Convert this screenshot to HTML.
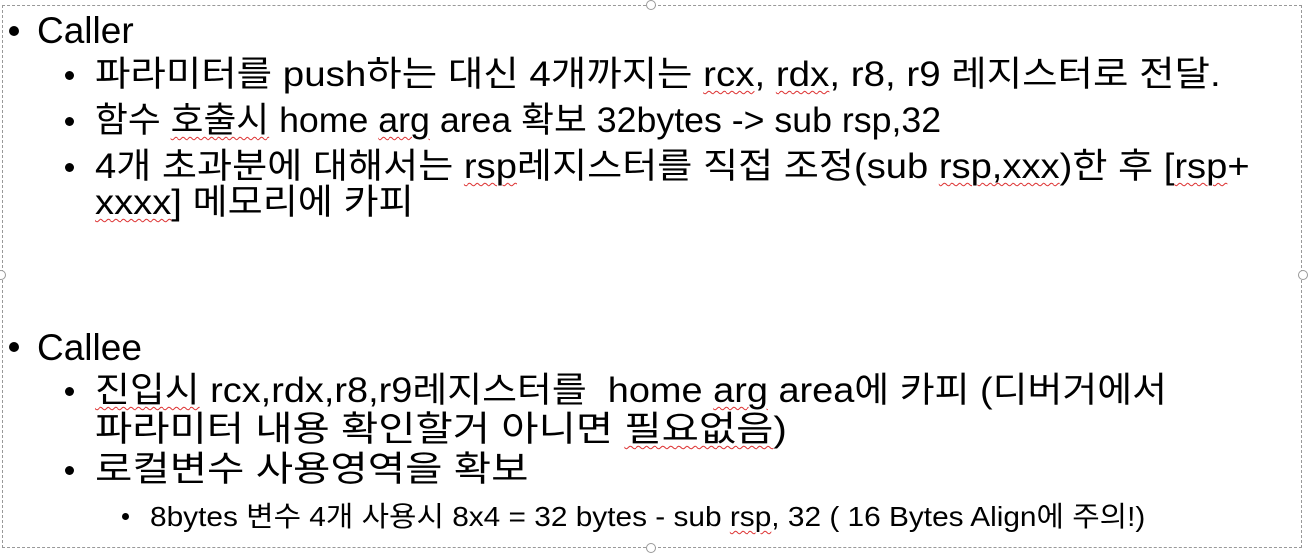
<!DOCTYPE html>
<html><head><meta charset="utf-8"><style>
html,body{margin:0;padding:0;background:#fff;width:1310px;height:556px;overflow:hidden;position:relative;font-family:"Liberation Sans","Noto Sans CJK KR",sans-serif;color:#000}
.l{position:absolute;white-space:nowrap;line-height:1;transform-origin:0 50%}
.b{position:absolute;width:9px;height:9px;border-radius:50%;background:#000}
.w{text-decoration:underline wavy #d33;text-decoration-thickness:1px;text-underline-offset:4px}
.box{position:absolute;left:2px;top:5px;width:1300px;height:543px;border:1px dashed #999;box-sizing:border-box}
.h{position:absolute;width:8px;height:8px;border:1px solid #999;border-radius:50%;background:#fff}
</style></head><body>
<div class="box"></div>
<div class="h" style="left:646px;top:0px"></div>
<div class="h" style="left:1298px;top:270px"></div>
<div class="h" style="left:646px;top:543px"></div>
<div class="h" style="left:-4px;top:270px"></div>

<div class="b" style="left:9px;top:26px;width:10px;height:10px"></div>
<div class="l" style="left:37px;top:12px;font-size:37px">Caller</div>
<div class="b" style="left:65px;top:71px"></div>
<div class="l" style="left:95px;top:57px;font-size:35px;transform:scaleX(1.10)">파라미터를 push하는 대신 4개까지는 <span class="w">rcx</span>, <span class="w">rdx</span>, r8, r9 레지스터로 전달.</div>
<div class="b" style="left:65px;top:117px"></div>
<div class="l" style="left:95px;top:103px;font-size:35px;transform:scaleX(1.02)">함수 <span class="w">호출시</span> home <span class="w">arg</span> area 확보 32bytes -&gt; sub rsp,32</div>
<div class="b" style="left:65px;top:163px"></div>
<div class="l" style="left:95px;top:149px;font-size:35px;transform:scaleX(1.09)">4개 초과분에 대해서는 <span class="w">rsp</span>레지스터를 직접 조정(sub <span class="w">rsp,xxx</span>)한 후 [<span class="w">rsp</span>+</div>
<div class="l" style="left:95px;top:185px;font-size:35px;transform:scaleX(1.09)"><span class="w">xxxx</span>] 메모리에 카피</div>

<div class="b" style="left:9px;top:342px;width:10px;height:10px"></div>
<div class="l" style="left:37px;top:329px;font-size:37px">Callee</div>
<div class="b" style="left:65px;top:387px"></div>
<div class="l" style="left:95px;top:373px;font-size:35px;transform:scaleX(1.083)"><span class="w">진입시</span> rcx,rdx,r8,r9레지스터를 &nbsp;home <span class="w">arg</span> area에 카피 (디버거에서</div>
<div class="l" style="left:95px;top:412px;font-size:35px;transform:scaleX(1.157)">파라미터 내용 확인할거 아니면 <span class="w">필요없음</span>)</div>
<div class="b" style="left:65px;top:466px"></div>
<div class="l" style="left:95px;top:452px;font-size:35px;transform:scaleX(1.16)">로컬변수 사용영역을 확보</div>
<div class="b" style="left:122px;top:513px;width:7px;height:7px"></div>
<div class="l" style="left:150px;top:503px;font-size:28px;transform:scaleX(1.065)">8bytes 변수 4개 사용시 8x4 = 32 bytes - sub <span class="w">rsp</span>, 32 ( 16 Bytes Align에 주의!)</div>
</body></html>
